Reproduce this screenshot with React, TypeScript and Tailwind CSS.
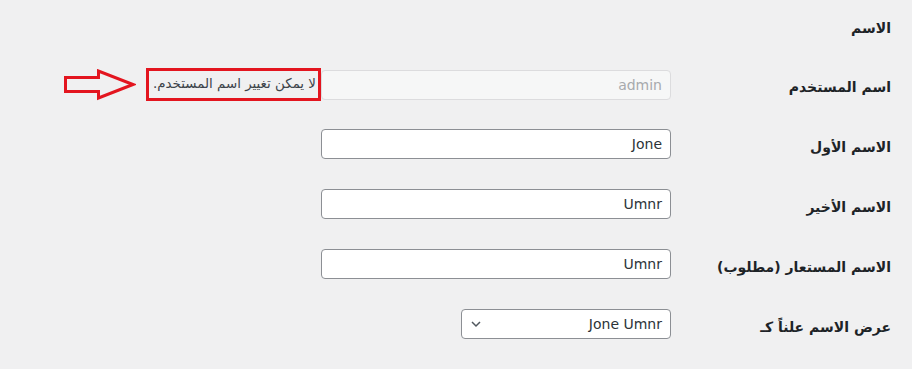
const font = { fontFamily: '"DejaVu Sans", "Liberation Sans", sans-serif' }

const Row = ({ label, children }: { label: string; children: React.ReactNode }) => (
  <div className="flex h-[60px] flex-row items-start py-[15px]">
    <div className="w-[220px] shrink-0 pt-[8px] text-[14px] font-bold leading-[20px] text-[#1d2327]">
      {label}
    </div>
    <div className="flex flex-row items-center">{children}</div>
  </div>
)

const TextInput = ({ value }: { value: string }) => (
  <div
    dir="ltr"
    className="flex h-[30px] w-[350px] items-center justify-end rounded-[4px] border border-[#8c8f94] bg-white px-[8px] text-[14px] text-[#2c3338]"
  >
    {value}
  </div>
)

export default function App() {
  return (
    <div
      dir="rtl"
      style={font}
      className="h-[369px] w-[912px] overflow-hidden bg-[#f0f0f1] pr-[21px]"
    >
      <div className="h-[54px] pt-[18px] text-[14px] font-semibold leading-[20px] text-[#1d2327]">
        الاسم
      </div>

      <Row label="اسم المستخدم">
        <div
          dir="ltr"
          className="flex h-[30px] w-[350px] items-center justify-end rounded-[4px] border border-[#dcdcde] bg-[#f6f7f7] px-[8px] text-[14px] text-[#a7aaad]"
        >
          admin
        </div>
        <span className="-mt-[1px] ml-[10px] flex h-[33px] w-[175px] items-center whitespace-nowrap border-[3px] border-[#e3151f] px-[2px] text-[13.4px] text-[#3c434a]">
          لا يمكن تغيير اسم المستخدم.
        </span>
        <svg width="72" height="32" viewBox="0 0 72 32" className="-mt-[1px]">
          <path
            d="M1.5 8.5 H34.5 V2 L69 15.5 L34.5 29 V22.5 H1.5 Z"
            fill="none"
            stroke="#e3151f"
            strokeWidth="3"
            strokeLinejoin="miter"
          />
        </svg>
      </Row>

      <Row label="الاسم الأول">
        <TextInput value="Jone" />
      </Row>
      <Row label="الاسم الأخير">
        <TextInput value="Umnr" />
      </Row>
      <Row label="الاسم المستعار (مطلوب)">
        <TextInput value="Umnr" />
      </Row>
      <Row label="عرض الاسم علناً كـ">
        <div
          dir="ltr"
          className="flex h-[30px] w-[210px] items-center justify-between rounded-[4px] border border-[#8c8f94] bg-white pl-[8px] pr-[8px] text-[14px] text-[#2c3338]"
        >
          <svg width="12" height="12" viewBox="0 0 12 12">
            <path d="M2 4 L6 8 L10 4" fill="none" stroke="#50575e" strokeWidth="1.5" />
          </svg>
          <span>Jone Umnr</span>
        </div>
      </Row>
    </div>
  )
}
